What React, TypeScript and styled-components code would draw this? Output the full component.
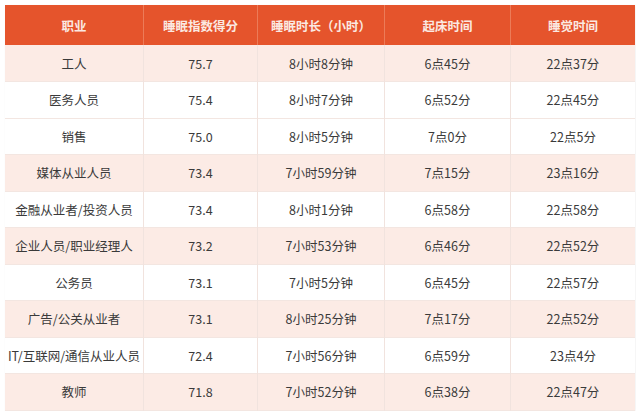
import React from "react";
import styled, { createGlobalStyle } from "styled-components";

const GlobalStyle = createGlobalStyle`
  html, body {
    margin: 0;
    padding: 0;
    background: #ffffff;
  }
  body {
    font-family: "Noto Sans CJK SC", "Liberation Sans", sans-serif;
  }
`;

type Row = {
  job: string;
  score: string;
  duration: string;
  wake: string;
  sleep: string;
  tinted: boolean;
};

const headers = ["职业", "睡眠指数得分", "睡眠时长（小时）", "起床时间", "睡觉时间"];
const widths = [138, 113, 126, 125, 124];

const rows: Row[] = [
  { job: "工人", score: "75.7", duration: "8小时8分钟", wake: "6点45分", sleep: "22点37分", tinted: true },
  { job: "医务人员", score: "75.4", duration: "8小时7分钟", wake: "6点52分", sleep: "22点45分", tinted: false },
  { job: "销售", score: "75.0", duration: "8小时5分钟", wake: "7点0分", sleep: "22点5分", tinted: false },
  { job: "媒体从业人员", score: "73.4", duration: "7小时59分钟", wake: "7点15分", sleep: "23点16分", tinted: true },
  { job: "金融从业者/投资人员", score: "73.4", duration: "8小时1分钟", wake: "6点58分", sleep: "22点58分", tinted: false },
  { job: "企业人员/职业经理人", score: "73.2", duration: "7小时53分钟", wake: "6点46分", sleep: "22点52分", tinted: true },
  { job: "公务员", score: "73.1", duration: "7小时5分钟", wake: "6点45分", sleep: "22点57分", tinted: false },
  { job: "广告/公关从业者", score: "73.1", duration: "8小时25分钟", wake: "7点17分", sleep: "22点52分", tinted: true },
  { job: "IT/互联网/通信从业人员", score: "72.4", duration: "7小时56分钟", wake: "6点59分", sleep: "23点4分", tinted: false },
  { job: "教师", score: "71.8", duration: "7小时52分钟", wake: "6点38分", sleep: "22点47分", tinted: true },
];

const Page = styled.div`
  padding: 5px 0 0 5px;
`;

const Table = styled.table`
  border-collapse: collapse;
  table-layout: fixed;
  width: 626px;
  box-shadow: 1px 1px 3px rgba(0, 0, 0, 0.06);
`;

const HeadCell = styled.th<{ $w: number }>`
  width: ${({ $w }) => $w}px;
  height: 40px;
  padding: 0;
  background: #e5542c;
  color: #fbe9e2;
  font-size: 12.5px;
  font-weight: 700;
  text-align: center;
  border-left: 1px solid #ec7b58;
  &:first-child {
    border-left: none;
  }
`;

const BodyRow = styled.tr<{ $tinted: boolean }>`
  height: 36.5px;
  background: ${({ $tinted }) => ($tinted ? "#fcebe5" : "#ffffff")};
  border-bottom: 1px solid #f3e6e1;
`;

const Cell = styled.td`
  padding: 0;
  text-align: center;
  font-size: 12.5px;
  color: #3a3a3a;
  border-left: 1px solid #f1e3de;
  white-space: nowrap;
  &:first-child {
    border-left: none;
  }
`;

export default function App() {
  return (
    <Page>
      <GlobalStyle />
      <Table>
        <thead>
          <tr>
            {headers.map((h, i) => (
              <HeadCell key={h} $w={widths[i]}>
                {h}
              </HeadCell>
            ))}
          </tr>
        </thead>
        <tbody>
          {rows.map((r) => (
            <BodyRow key={r.job} $tinted={r.tinted}>
              <Cell>{r.job}</Cell>
              <Cell>{r.score}</Cell>
              <Cell>{r.duration}</Cell>
              <Cell>{r.wake}</Cell>
              <Cell>{r.sleep}</Cell>
            </BodyRow>
          ))}
        </tbody>
      </Table>
    </Page>
  );
}
